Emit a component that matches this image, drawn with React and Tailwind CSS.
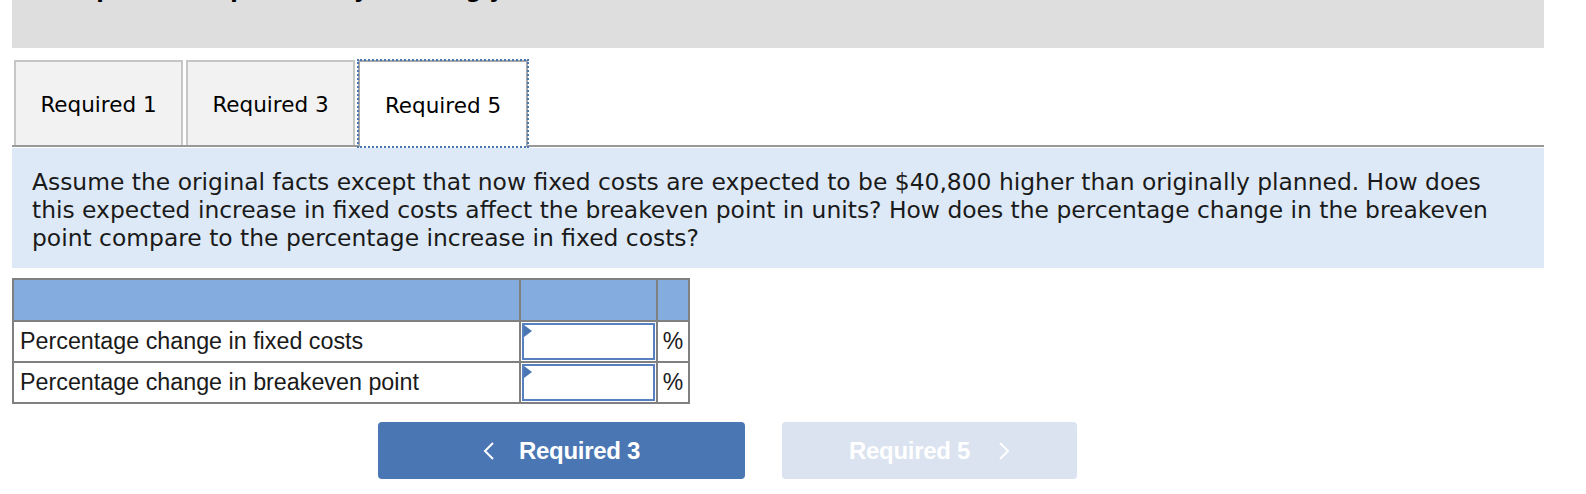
import React from "react";

function Tab({ label, active }) {
  if (active) {
    return (
      <div className="relative -mb-[2px] flex h-[87px] w-[170px] items-center justify-center bg-white border-2 border-b-0 border-[#a8a8a8] pt-[4px] outline-2 outline-dotted outline-[#4a76b4] -outline-offset-1">
        <span className="font-['DejaVu_Sans',sans-serif] text-[21.5px] text-black">{label}</span>
      </div>
    );
  }
  return (
    <div className="flex h-[85px] w-[169px] items-center justify-center bg-[#f2f2f2] border-2 border-b-0 border-[#c6c6c6] pt-[4px]">
      <span className="font-['DejaVu_Sans',sans-serif] text-[21.5px] text-black">{label}</span>
    </div>
  );
}

function Marker() {
  return (
    <svg className="absolute left-0 top-0" width="8" height="12" viewBox="0 0 8 12">
      <polygon points="0,0 8,6 0,12" fill="#4a76b4" />
    </svg>
  );
}

function Row({ label }) {
  return (
    <div className="flex h-[41px] border-t-2 border-[#808080]">
      <div className="flex w-[507px] items-center border-r-2 border-[#808080] pl-[6px] font-['Liberation_Sans',Arial,sans-serif] text-[23.3px] text-[#1a1a1a]">
        {label}
      </div>
      <div className="w-[137px] border-r-2 border-[#808080] p-[1px]">
        <div className="relative h-full w-full border-2 border-[#5680c0] bg-white">
          <Marker />
        </div>
      </div>
      <div className="flex flex-1 items-center justify-center font-['Liberation_Sans',Arial,sans-serif] text-[23px] text-[#1a1a1a]">
        %
      </div>
    </div>
  );
}

export default function App() {
  return (
    <div className="h-[494px] w-[1586px] overflow-hidden bg-white">
      <div className="ml-[12px] h-[48px] w-[1532px] overflow-hidden bg-[#dedede]">
        <p className="-mt-[21px] pl-[30px] font-['DejaVu_Sans',sans-serif] text-[22px] font-bold leading-[24px] text-black">
          Complete this question by entering your answers in the tabs below.
        </p>
      </div>

      <div className="ml-[12px] mt-[12px] flex w-[1532px] items-end gap-[3px] border-b-2 border-[#999999] pl-[2px]">
        <Tab label="Required 1" />
        <Tab label="Required 3" />
        <Tab label="Required 5" active />
      </div>

      <div className="ml-[12px] mt-[1px] w-[1532px] bg-[#dde9f6] pb-[16px] pl-[20px] pr-[24px] pt-[20px]">
        <p className="font-['DejaVu_Sans',sans-serif] text-[23.4px] leading-[28px] text-[#1a1a1a]">
          Assume the original facts except that now fixed costs are expected to be $40,800 higher than originally planned. How does this expected increase in fixed costs affect the breakeven point in units? How does the percentage change in the breakeven point compare to the percentage increase in fixed costs?
        </p>
      </div>

      <div className="ml-[12px] mt-[10px] w-[678px] border-2 border-t-0 border-[#808080]">
        <div className="flex h-[42px] border-t-2 border-[#808080] bg-[#84acdf]">
          <div className="w-[507px] border-r-2 border-[#808080]" />
          <div className="w-[137px] border-r-2 border-[#808080]" />
          <div className="flex-1" />
        </div>
        <Row label="Percentage change in fixed costs" />
        <Row label="Percentage change in breakeven point" />
      </div>

      <div className="ml-[378px] mt-[18px] flex gap-[37px]">
        <div className="flex h-[57px] w-[367px] items-center justify-center gap-[24px] rounded-[4px] bg-[#4a76b4] text-white">
          <svg width="12" height="20" viewBox="0 0 12 20" fill="none" stroke="white" strokeWidth="2">
            <polyline points="10,2 2,10 10,18" />
          </svg>
          <span className="font-['Liberation_Sans',Arial,sans-serif] text-[24px] font-bold tracking-[-0.3px]">Required 3</span>
        </div>
        <div className="flex h-[57px] w-[295px] items-center justify-center gap-[28px] rounded-[4px] bg-[#dae3ef] text-white">
          <span className="font-['Liberation_Sans',Arial,sans-serif] text-[24px] font-bold tracking-[-0.3px]">Required 5</span>
          <svg width="12" height="20" viewBox="0 0 12 20" fill="none" stroke="white" strokeWidth="2">
            <polyline points="2,2 10,10 2,18" />
          </svg>
        </div>
      </div>
    </div>
  );
}
